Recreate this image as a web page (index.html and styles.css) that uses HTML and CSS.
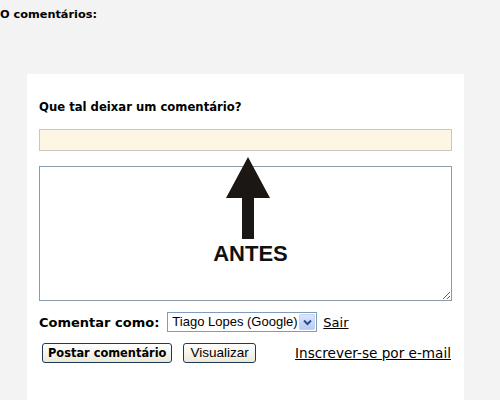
FILE: index.html
```html
<!DOCTYPE html>
<html lang="pt">
<head>
<meta charset="utf-8">
<title>Comentários</title>
<link rel="stylesheet" href="styles.css">
</head>
<body>
<h4 class="count">O comentários:</h4>
<div class="panel">
  <h4 class="title">Que tal deixar um comentário?</h4>
  <div class="fields">
    <div class="input"></div>
    <textarea class="body"></textarea>
    <div class="overlay">
      <svg class="arrow" width="46" height="84" viewBox="0 0 46 84">
        <polygon points="23,0 45,41 29,41 29,82 17,82 17,41 1,41" fill="#1a1715"/>
      </svg>
      <div class="antes">ANTES</div>
    </div>
  </div>
  <div class="identity">
    <span class="label">Comentar como:</span>
    <div class="select">
      <span class="value">Tiago Lopes (Google)</span>
      <span class="drop">
        <svg width="9" height="7" viewBox="0 0 9 7"><path d="M1 1.5 L4.5 5 L8 1.5" fill="none" stroke="#2b4c8a" stroke-width="2"/></svg>
      </span>
    </div>
    <a class="link" href="#">Sair</a>
  </div>
  <div class="actions">
    <button class="btn primary">Postar comentário</button>
    <button class="btn">Visualizar</button>
    <a class="link subscribe" href="#">Inscrever-se por e-mail</a>
  </div>
</div>
</body>
</html>
```
FILE: styles.css
```css
html, body {
  margin: 0;
  padding: 0;
  background: #f3f3f3;
  height: 100%;
  overflow: hidden;
}
body {
  font-family: "DejaVu Sans", Verdana, sans-serif;
  color: #000;
}
.count {
  margin: 0;
  padding-top: 7px;
  font-size: 11.3px;
  line-height: 15px;
  font-weight: bold;
}
.panel {
  margin: 52px 0 0 27px;
  width: 413px;
  height: 301px;
  padding: 25px 12px 0 12px;
  background: #fff;
}
.title {
  margin: 0;
  font-size: 11.65px;
  line-height: 16px;
  font-weight: bold;
}
.fields {
  position: relative;
  margin-top: 14px;
  display: flex;
  flex-direction: column;
  gap: 15px;
}
.input {
  height: 20px;
  width: 411px;
  background: #fdf6e4;
  border: 1px solid #c9c6bd;
}
.body {
  display: block;
  margin: 0;
  width: 409px;
  height: 131px;
  padding: 1px;
  border: 1px solid #8a9cab;
  background: #fff;
  resize: both;
  box-sizing: content-box;
}
.overlay {
  position: absolute;
  left: 170px;
  top: 28px;
  width: 80px;
  display: flex;
  flex-direction: column;
  align-items: center;
  pointer-events: none;
}
.arrow {
  display: block;
  margin-left: -2px;
}
.antes {
  margin-top: 1px;
  margin-left: 3px;
  font-family: "Liberation Sans", Arial, sans-serif;
  font-weight: bold;
  font-size: 22px;
  line-height: 24px;
  color: #111;
}
.identity {
  display: flex;
  align-items: center;
  margin-top: 11px;
  height: 20px;
}
.label {
  font-size: 13px;
  font-weight: bold;
  margin-right: 8px;
}
.select {
  display: flex;
  align-items: center;
  height: 18px;
  width: 148px;
  border: 1px solid #7f9db9;
  background: #fff;
  box-sizing: content-box;
}
.value {
  flex: 1;
  padding-left: 4px;
  font-family: "Liberation Sans", Arial, sans-serif;
  font-size: 13px;
  line-height: 18px;
}
.drop {
  width: 16px;
  height: 16px;
  margin-right: 1px;
  background: linear-gradient(#dbe6fb, #b7cbf5);
  border: 1px solid #c3d3f8;
  box-sizing: border-box;
  display: flex;
  align-items: center;
  justify-content: center;
  border-radius: 1px;
}
.link {
  color: #000;
  font-size: 13px;
  text-decoration: underline;
}
.identity .link {
  margin-left: 6px;
}
.actions {
  display: flex;
  align-items: center;
  margin-top: 11px;
  padding-left: 3px;
}
.btn {
  height: 20px;
  padding: 0 6px;
  font-family: "Liberation Sans", Arial, sans-serif;
  font-size: 13.5px;
  color: #000;
  background: linear-gradient(#ffffff, #ece9d8);
  border: 1px solid #1c3a5a;
  border-radius: 3px;
  line-height: 16px;
}
.btn.primary {
  font-family: "DejaVu Sans", Verdana, sans-serif;
  font-weight: bold;
  font-size: 11.4px;
  padding: 0 5px;
  margin-right: 11px;
}
.subscribe {
  margin-left: auto;
  margin-right: 1px;
  font-size: 13.6px;
}
```
